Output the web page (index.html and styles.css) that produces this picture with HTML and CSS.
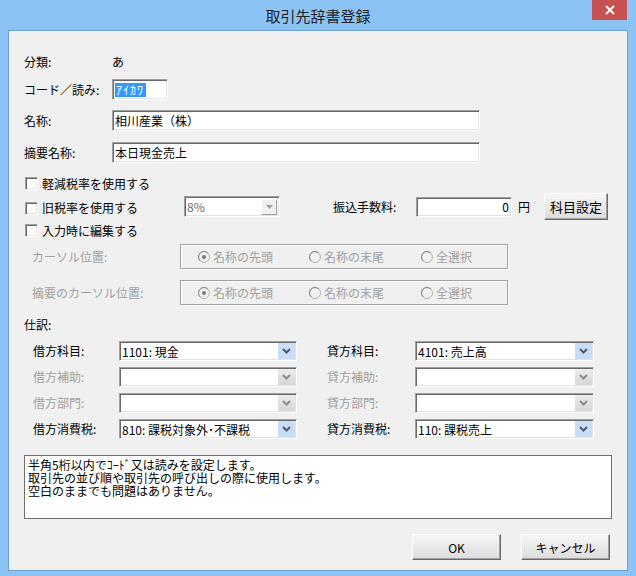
FILE: index.html
```html
<!DOCTYPE html>
<html lang="ja">
<head>
<meta charset="utf-8">
<title>取引先辞書登録</title>
<link rel="stylesheet" href="styles.css">
</head>
<body>
<div class="window">
  <div class="titlebar">
    <div></div>
    <div class="title">取引先辞書登録</div>
    <div class="close"><svg width="10" height="10" viewBox="0 0 10 10"><path d="M1 1L9 9M9 1L1 9" stroke="#fff" stroke-width="2"/></svg></div>
  </div>
  <div class="content">
    <div class="frow r1"><span class="lbl">分類:</span><span class="val">あ</span></div>
    <div class="frow r2"><span class="lbl">コード／読み:</span><div class="input code"><span class="sel">ｱｲｶﾜ</span></div></div>
    <div class="frow r3"><span class="lbl">名称:</span><div class="input wide">相川産業（株）</div></div>
    <div class="frow r4"><span class="lbl">摘要名称:</span><div class="input wide">本日現金売上</div></div>

    <div class="crow c1"><div class="chk"><span class="cb"></span><span>軽減税率を使用する</span></div></div>
    <div class="crow c2">
      <div class="chk w"><span class="cb"></span><span>旧税率を使用する</span></div>
      <div class="dcombo"><span class="cv">8%</span><span class="tri"><svg width="7" height="4" viewBox="0 0 7 4"><path d="M0 0H7L3.5 4Z" fill="#a0a0a0"/></svg></span></div>
      <span class="fee-lbl">振込手数料:</span>
      <div class="input fee">0</div>
      <span class="yen">円</span>
      <div class="btn kamoku">科目設定</div>
    </div>
    <div class="crow c3"><div class="chk"><span class="cb"></span><span>入力時に編集する</span></div></div>

    <div class="rrow rr1">
      <span class="rlbl">カーソル位置:</span>
      <div class="rbox">
        <div class="radio"><svg width="12" height="12" viewBox="0 0 12 12"><circle cx="6" cy="6" r="5.5" fill="#f0f0f0" stroke="#b4b4b4"/><path d="M2.1 9.9A5.5 5.5 0 0 1 9.9 2.1" fill="none" stroke="#8a8a8a"/><circle cx="6" cy="6" r="2" fill="#7a7a7a"/></svg><span>名称の先頭</span></div>
        <div class="radio"><svg width="12" height="12" viewBox="0 0 12 12"><circle cx="6" cy="6" r="5.5" fill="#f0f0f0" stroke="#b4b4b4"/><path d="M2.1 9.9A5.5 5.5 0 0 1 9.9 2.1" fill="none" stroke="#8a8a8a"/></svg><span>名称の末尾</span></div>
        <div class="radio"><svg width="12" height="12" viewBox="0 0 12 12"><circle cx="6" cy="6" r="5.5" fill="#f0f0f0" stroke="#b4b4b4"/><path d="M2.1 9.9A5.5 5.5 0 0 1 9.9 2.1" fill="none" stroke="#8a8a8a"/></svg><span>全選択</span></div>
      </div>
    </div>
    <div class="rrow rr2">
      <span class="rlbl">摘要のカーソル位置:</span>
      <div class="rbox">
        <div class="radio"><svg width="12" height="12" viewBox="0 0 12 12"><circle cx="6" cy="6" r="5.5" fill="#f0f0f0" stroke="#b4b4b4"/><path d="M2.1 9.9A5.5 5.5 0 0 1 9.9 2.1" fill="none" stroke="#8a8a8a"/><circle cx="6" cy="6" r="2" fill="#7a7a7a"/></svg><span>名称の先頭</span></div>
        <div class="radio"><svg width="12" height="12" viewBox="0 0 12 12"><circle cx="6" cy="6" r="5.5" fill="#f0f0f0" stroke="#b4b4b4"/><path d="M2.1 9.9A5.5 5.5 0 0 1 9.9 2.1" fill="none" stroke="#8a8a8a"/></svg><span>名称の末尾</span></div>
        <div class="radio"><svg width="12" height="12" viewBox="0 0 12 12"><circle cx="6" cy="6" r="5.5" fill="#f0f0f0" stroke="#b4b4b4"/><path d="M2.1 9.9A5.5 5.5 0 0 1 9.9 2.1" fill="none" stroke="#8a8a8a"/></svg><span>全選択</span></div>
      </div>
    </div>

    <div class="section">仕訳:</div>
    <div class="journal">
      <span class="jl">借方科目:</span>
      <div class="combo"><span class="cv">1101: 現金</span><span class="drop on"><svg width="9" height="6" viewBox="0 0 9 6"><path d="M1 1L4.5 4.5L8 1" fill="none" stroke="#4b5b78" stroke-width="2"/></svg></span></div>
      <span class="jl right">貸方科目:</span>
      <div class="combo"><span class="cv">4101: 売上高</span><span class="drop on"><svg width="9" height="6" viewBox="0 0 9 6"><path d="M1 1L4.5 4.5L8 1" fill="none" stroke="#4b5b78" stroke-width="2"/></svg></span></div>

      <span class="jl dis">借方補助:</span>
      <div class="combo"><span class="cv"></span><span class="drop off"><svg width="9" height="6" viewBox="0 0 9 6"><path d="M1 1L4.5 4.5L8 1" fill="none" stroke="#8c8c8c" stroke-width="2"/></svg></span></div>
      <span class="jl right dis">貸方補助:</span>
      <div class="combo"><span class="cv"></span><span class="drop off"><svg width="9" height="6" viewBox="0 0 9 6"><path d="M1 1L4.5 4.5L8 1" fill="none" stroke="#8c8c8c" stroke-width="2"/></svg></span></div>

      <span class="jl dis">借方部門:</span>
      <div class="combo"><span class="cv"></span><span class="drop off"><svg width="9" height="6" viewBox="0 0 9 6"><path d="M1 1L4.5 4.5L8 1" fill="none" stroke="#8c8c8c" stroke-width="2"/></svg></span></div>
      <span class="jl right dis">貸方部門:</span>
      <div class="combo"><span class="cv"></span><span class="drop off"><svg width="9" height="6" viewBox="0 0 9 6"><path d="M1 1L4.5 4.5L8 1" fill="none" stroke="#8c8c8c" stroke-width="2"/></svg></span></div>

      <span class="jl">借方消費税:</span>
      <div class="combo"><span class="cv">810: 課税対象外･不課税</span><span class="drop on"><svg width="9" height="6" viewBox="0 0 9 6"><path d="M1 1L4.5 4.5L8 1" fill="none" stroke="#4b5b78" stroke-width="2"/></svg></span></div>
      <span class="jl right">貸方消費税:</span>
      <div class="combo"><span class="cv">110: 課税売上</span><span class="drop on"><svg width="9" height="6" viewBox="0 0 9 6"><path d="M1 1L4.5 4.5L8 1" fill="none" stroke="#4b5b78" stroke-width="2"/></svg></span></div>
    </div>

    <div class="memo">半角5桁以内でｺｰﾄﾞ又は読みを設定します。<br>取引先の並び順や取引先の呼び出しの際に使用します。<br>空白のままでも問題はありません。</div>

    <div class="btns">
      <div class="btn big">OK</div>
      <div class="btn big">キャンセル</div>
    </div>
  </div>
</div>
</body>
</html>
```

FILE: styles.css
```css
* { box-sizing: border-box; }
html, body { margin: 0; padding: 0; }
body {
  width: 636px;
  height: 576px;
  overflow: hidden;
  background: #8bc4f4;
  font-family: "Noto Sans CJK JP", "Noto Sans", sans-serif;
  font-size: 12px;
  color: #000;
}
.window {
  width: 636px;
  height: 576px;
  background: #8bc4f4;
  display: flex;
  flex-direction: column;
}
.titlebar {
  height: 30px;
  display: grid;
  grid-template-columns: 1fr auto 1fr;
  align-items: start;
}
.title {
  font-size: 15px;
  line-height: 30px;
  color: #222;
  padding-top: 1px;
}
.close {
  justify-self: end;
  width: 35px;
  height: 20px;
  margin-right: 9px;
  background: #c75050;
  display: flex;
  align-items: center;
  justify-content: center;
}
.content {
  margin: 0 8px;
  height: 541px;
  background: #f0f0f0;
  border: 1px solid #6b9fd3;
  padding: 20px 15px 0 15px;
  display: flex;
  flex-direction: column;
}
.frow { display: flex; align-items: center; height: 21px; line-height: 14px; }
.lbl { width: 88px; flex: none; }
.r2 { margin-top: 7px; }
.r3 { margin-top: 10px; }
.r4 { margin-top: 11px; }

.input {
  height: 21px;
  background: #fff;
  border: 1px solid;
  border-color: #a0a0a0 #fff #fff #a0a0a0;
  box-shadow: inset 1px 1px 0 #696969, inset -1px -1px 0 #e3e3e3;
  padding: 0 2px;
  display: flex;
  align-items: center;
  line-height: 14px;
}
.code { width: 56px; }
.wide { width: 368px; }
.sel { background: #3399ff; color: #fff; padding: 0 2px 0 1px; letter-spacing: 1px; line-height: 14px; }

.crow { display: flex; align-items: center; height: 15px; line-height: 14px; }
.c1 { margin-top: 13px; }
.c2 { margin-top: 2px; height: 27px; }
.c3 { margin-top: 3px; }
.chk { display: flex; align-items: center; gap: 4px; margin-left: 1px; }
.chk.w { width: 159px; margin-top: 3px; }
.cb {
  width: 13px;
  height: 13px;
  flex: none;
  background: #fff;
  border: 1px solid;
  border-color: #a0a0a0 #fff #fff #a0a0a0;
  box-shadow: inset 1px 1px 0 #696969, inset -1px -1px 0 #e3e3e3;
}
.dcombo {
  width: 96px;
  height: 21px;
  background: #fff;
  border: 1px solid;
  border-color: #a0a0a0 #fff #fff #a0a0a0;
  box-shadow: inset 1px 1px 0 #696969, inset -1px -1px 0 #e3e3e3;
  display: flex;
  align-items: center;
  padding: 2px;
  color: #6d6d6d;
}
.dcombo .cv { flex: 1; }
.tri {
  width: 16px;
  height: 16px;
  background: #f0f0f0;
  border: 1px solid;
  border-color: #fff #a0a0a0 #a0a0a0 #fff;
  display: flex;
  align-items: center;
  justify-content: center;
}
.fee-lbl { margin-left: 53px; width: 83px; }
.fee { width: 96px; justify-content: flex-end; padding-right: 2px; height: 20px; }
.yen { margin-left: 6px; width: 12px; }
.btn {
  display: flex;
  align-items: center;
  justify-content: center;
  background: linear-gradient(#f6f6f6, #dcdcdc);
  border: 1px solid;
  border-color: #fff #696969 #696969 #fff;
  box-shadow: inset -1px -1px 0 #a0a0a0;
  color: #000;
}
.kamoku { margin-left: 14px; width: 64px; height: 27px; font-size: 13px; }

.rrow { display: flex; align-items: center; height: 25px; color: #a0a0a0; }
.rr1 { margin-top: 6px; }
.rr2 { margin-top: 11px; }
.rlbl { width: 148px; margin-left: 8px; }
.rbox {
  width: 328px;
  height: 25px;
  border: 1px solid #a0a0a0;
  box-shadow: inset 1px 1px 0 #fff, 1px 1px 0 #fff;
  display: grid;
  grid-template-columns: 111px 112px auto;
  align-items: center;
  padding-left: 17px;
}
.radio { display: flex; align-items: center; gap: 3px; }

.section { margin-top: 12px; height: 15px; line-height: 15px; }
.journal {
  margin-top: 9px;
  margin-left: 9px;
  display: grid;
  grid-template-columns: 86px 178px 118px 179px;
  grid-auto-rows: 20px;
  row-gap: 6px;
  align-items: center;
}
.jl { line-height: 14px; }
.jl.right { padding-left: 30px; }
.jl.dis { color: #a0a0a0; }
.combo {
  height: 20px;
  background: #fff;
  border: 1px solid;
  border-color: #a0a0a0 #fff #fff #a0a0a0;
  box-shadow: inset 1px 1px 0 #696969, inset -1px -1px 0 #e3e3e3;
  display: flex;
  align-items: stretch;
  padding: 1px;
}
.combo .cv { flex: 1; display: flex; align-items: center; padding-left: 1px; white-space: nowrap; overflow: hidden; }
.drop { width: 17px; display: flex; align-items: center; justify-content: center; }
.drop.on { background: #c9ddf7; }
.drop.off { background: linear-gradient(#ececec, #d6d6d6); }

.memo {
  margin-top: 16px;
  width: 588px;
  height: 64px;
  background: #fff;
  border: 1px solid #707070;
  padding: 2px 3px;
  line-height: 13px;
}
.btns {
  margin-top: 15px;
  display: flex;
  justify-content: flex-end;
  gap: 20px;
  padding-right: 2px;
}
.big { width: 89px; height: 26px; }
```
